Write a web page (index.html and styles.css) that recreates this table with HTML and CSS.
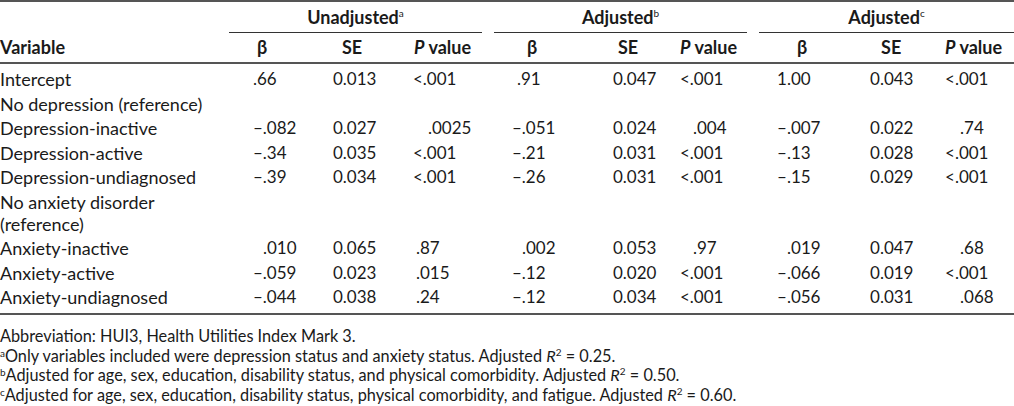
FILE: index.html
```html
<!DOCTYPE html>
<html lang="en">
<head>
<meta charset="utf-8">
<title>HUI3 regression table</title>
<link rel="stylesheet" href="styles.css">
</head>
<body>
<div class="page">
<table class="tbl">
  <colgroup>
    <col class="w-var"><col class="w-b"><col class="w-se"><col class="w-p"><col class="w-gap">
    <col class="w-b2"><col class="w-se2"><col class="w-p"><col class="w-gap">
    <col class="w-b2"><col class="w-se"><col class="w-p3">
  </colgroup>
  <thead>
    <tr class="grp">
      <th></th>
      <th colspan="3" class="g">Unadjusted<sup>a</sup></th>
      <th class="gap"></th>
      <th colspan="3" class="g">Adjusted<sup>b</sup></th>
      <th class="gap"></th>
      <th colspan="3" class="g">Adjusted<sup>c</sup></th>
    </tr>
    <tr class="hdr">
      <th>Variable</th>
      <th>β</th><th>SE</th><th><i>P</i> value</th>
      <th class="gap"></th>
      <th>β</th><th>SE</th><th><i>P</i> value</th>
      <th class="gap"></th>
      <th>β</th><th>SE</th><th><i>P</i> value</th>
    </tr>
  </thead>
  <tbody>
    <tr class="first">
      <td>Intercept</td>
      <td>.66</td><td>0.013</td><td>&lt;.001</td><td></td>
      <td class="x5">.91</td><td>0.047</td><td>&lt;.001</td><td></td>
      <td>1.00</td><td>0.043</td><td>&lt;.001</td>
    </tr>
    <tr>
      <td>No depression (reference)</td>
      <td></td><td></td><td></td><td></td><td></td><td></td><td></td><td></td><td></td><td></td><td></td>
    </tr>
    <tr>
      <td>Depression-inactive</td>
      <td>–.082</td><td>0.027</td><td class="x15">.0025</td><td></td>
      <td>–.051</td><td>0.024</td><td class="x13">.004</td><td></td>
      <td>–.007</td><td>0.022</td><td class="x15">.74</td>
    </tr>
    <tr>
      <td>Depression-active</td>
      <td>–.34</td><td>0.035</td><td>&lt;.001</td><td></td>
      <td>–.21</td><td>0.031</td><td>&lt;.001</td><td></td>
      <td>–.13</td><td>0.028</td><td>&lt;.001</td>
    </tr>
    <tr>
      <td>Depression-undiagnosed</td>
      <td>–.39</td><td>0.034</td><td>&lt;.001</td><td></td>
      <td>–.26</td><td>0.031</td><td>&lt;.001</td><td></td>
      <td>–.15</td><td>0.029</td><td>&lt;.001</td>
    </tr>
    <tr>
      <td>No anxiety disorder (reference)</td>
      <td></td><td></td><td></td><td></td><td></td><td></td><td></td><td></td><td></td><td></td><td></td>
    </tr>
    <tr>
      <td>Anxiety-inactive</td>
      <td class="x10">.010</td><td>0.065</td><td class="x3">.87</td><td></td>
      <td class="x10">.002</td><td>0.053</td><td class="x13">.97</td><td></td>
      <td class="x10">.019</td><td>0.047</td><td class="x15">.68</td>
    </tr>
    <tr>
      <td>Anxiety-active</td>
      <td>–.059</td><td>0.023</td><td class="x3">.015</td><td></td>
      <td>–.12</td><td>0.020</td><td>&lt;.001</td><td></td>
      <td>–.066</td><td>0.019</td><td>&lt;.001</td>
    </tr>
    <tr class="last">
      <td>Anxiety-undiagnosed</td>
      <td>–.044</td><td>0.038</td><td class="x3">.24</td><td></td>
      <td>–.12</td><td>0.034</td><td>&lt;.001</td><td></td>
      <td>–.056</td><td>0.031</td><td class="x15">.068</td>
    </tr>
  </tbody>
</table>
<div class="notes">
  <p>Abbreviation: HUI3, Health Utilities Index Mark 3.</p>
  <p><sup>a</sup>Only variables included were depression status and anxiety status. Adjusted <i>R</i><sup class="sq">2</sup> = 0.25.</p>
  <p><sup>b</sup>Adjusted for age, sex, education, disability status, and physical comorbidity. Adjusted <i>R</i><sup class="sq">2</sup> = 0.50.</p>
  <p><sup>c</sup>Adjusted for age, sex, education, disability status, physical comorbidity, and fatigue. Adjusted <i>R</i><sup class="sq">2</sup> = 0.60.</p>
</div>
</div>
</body>
</html>
```
FILE: styles.css
```css
html, body {
  margin: 0;
  padding: 0;
  background: #fff;
}
body {
  font-family: Lato, "Open Sans", sans-serif;
  font-size: 16px;
  color: #1a1a1a;
}
.page {
  width: 1014px;
}
.tbl {
  width: 1014px;
  table-layout: fixed;
  border-collapse: collapse;
  border-spacing: 0;
  font-size: 17px;
}
.w-var { width: 229px; }
.w-b { width: 91px; }
.w-se { width: 80px; }
.w-p { width: 82px; }
.w-gap { width: 12px; }
.w-b2 { width: 96px; }
.w-se2 { width: 75px; }
.w-p3 { width: 79px; }

.tbl th, .tbl td {
  padding: 0;
  text-align: left;
  font-weight: normal;
  line-height: 22px;
  vertical-align: top;
  white-space: nowrap;
}
.tbl th {
  font-size: 18px;
}
.tbl td:first-child {
  font-size: 18px;
  white-space: normal;
  padding-right: 14px;
}
.tbl sup {
  font-size: 10px;
  line-height: 0;
  vertical-align: 7px;
  font-weight: normal;
}

/* group header row */
.grp th {
  border-top: 2px solid #555;
  padding: 4px 0 4px;
  font-weight: 700;
}
.grp th.g {
  text-align: center;
  border-bottom: 1px solid #333;
}
/* column header row */
.hdr th {
  font-weight: 700;
  padding: 3px 0 4px;
  border-bottom: 2px solid #555;
}
.hdr th:nth-child(2) { padding-left: 28px; }
.hdr th:nth-child(3) { padding-left: 22px; }
.hdr th:nth-child(4) { padding-left: 14px; }
.hdr th:nth-child(6) { padding-left: 33px; }
.hdr th:nth-child(7) { padding-left: 28px; }
.hdr th:nth-child(8) { padding-left: 15px; }
.hdr th:nth-child(10) { padding-left: 38px; }
.hdr th:nth-child(11) { padding-left: 26px; }
.hdr th:nth-child(12) { padding-left: 10px; }
.hdr i, .notes i { font-style: italic; }

/* body rows */
.tbl td {
  padding-top: 1px;
  padding-bottom: 1.5px;
}
.tbl tr.first td { padding-top: 4px; }
.tbl tr.last td {
  padding-bottom: 5px;
  border-bottom: 2px solid #555;
}
.tbl td:nth-child(2) { padding-left: 24px; }
.tbl td:nth-child(3) { padding-left: 13px; }
.tbl td:nth-child(4) { padding-left: 13px; }
.tbl td:nth-child(6) { padding-left: 18px; }
.tbl td:nth-child(7) { padding-left: 23px; }
.tbl td:nth-child(8) { padding-left: 15px; }
.tbl td:nth-child(10) { padding-left: 18px; }
.tbl td:nth-child(11) { padding-left: 15px; }
.tbl td:nth-child(12) { padding-left: 10px; }

.tbl td.x3 { text-indent: 3px; }
.tbl td.x5 { text-indent: 5px; }
.tbl td.x10 { text-indent: 10px; }
.tbl td.x13 { text-indent: 13px; }
.tbl td.x15 { text-indent: 15px; }

/* footnotes */
.notes {
  padding-top: 11px;
  font-size: 16.3px;
}
.notes p {
  margin: 0;
  line-height: 19.5px;
}
.notes sup {
  font-size: 10px;
  line-height: 0;
  vertical-align: 5px;
}
.notes sup.sq {
  font-size: 10px;
  vertical-align: 6px;
}
```
